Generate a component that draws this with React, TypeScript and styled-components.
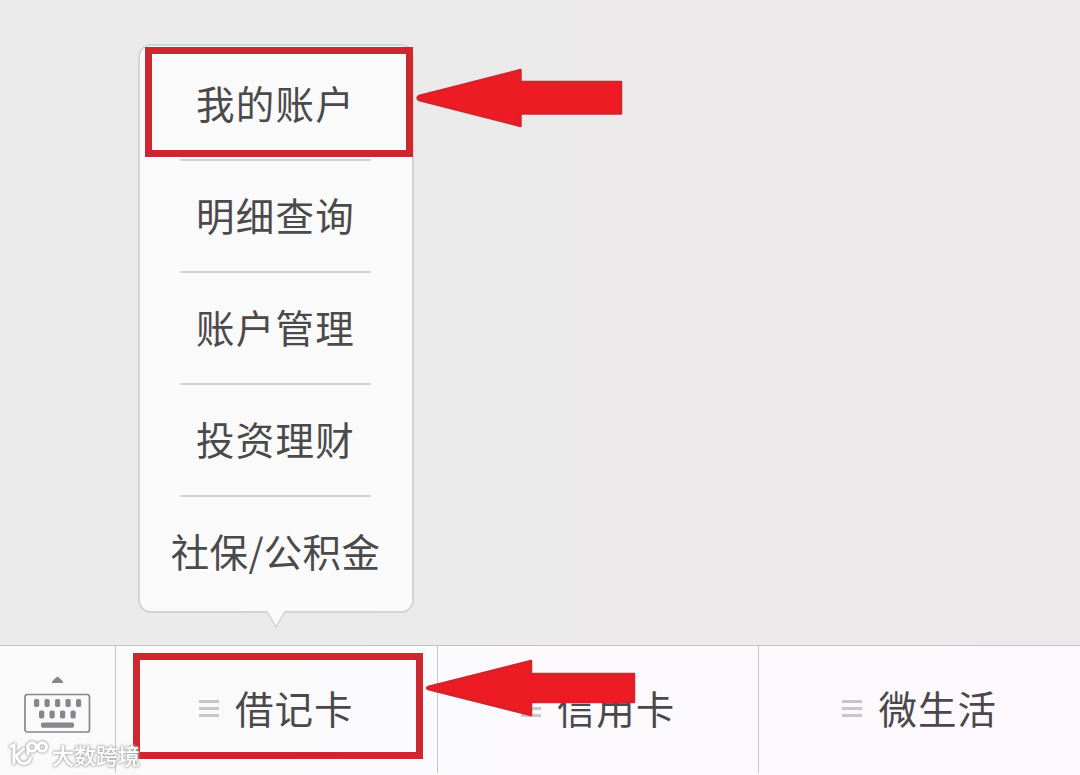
import styled, { createGlobalStyle } from "styled-components";

const GlobalStyle = createGlobalStyle`
  * {
    box-sizing: border-box;
  }
  body {
    margin: 0;
    overflow: hidden;
    font-family: "Noto Sans CJK SC", "Noto Sans", sans-serif;
  }
`;
const Screen = styled.div`
  position: relative;
  width: 1080px;
  height: 775px;
  display: flex;
  flex-direction: column;
  background: linear-gradient(90deg, #ebebeb 0%, #ebeaeb 40%, #ece9ea 100%);
`;
const Chat = styled.main`
  flex: 1;
  padding: 44px 0 0 137.5px;
`;
const MenuBubble = styled.div`
  position: relative;
  width: 276px;
  height: 569px;
  background: #fbfafb;
  border: 2px solid #d6d5d6;
  border-radius: 13px;
`;
const Menu = styled.ul`
  margin: 0;
  padding: 3px 0 0;
  list-style: none;
  display: flex;
  flex-direction: column;
  align-items: center;
`;
const MenuItem = styled.li<{ $tight: boolean }>`
  width: 191px;
  height: 112px;
  padding-bottom: 3px;
  display: flex;
  align-items: center;
  justify-content: center;
  color: #4b4a4b;
  font-size: 38.5px;
  letter-spacing: ${({ $tight }) => ($tight ? "0.3px" : "1.2px")};
  line-height: 1;
  white-space: nowrap;
  &:not(:last-child) {
    border-bottom: 2px solid #d3d2d4;
  }
  &:last-child {
    padding-bottom: 5px;
  }
`;
const MenuTail = styled.svg`
  position: absolute;
  left: 125px;
  top: 564px;
`;
const BottomBar = styled.nav`
  display: flex;
  height: 130px;
  border-top: 1.5px solid #c5c3c5;
  background: linear-gradient(90deg, #fafafa 0%, #fbfafc 40%, #fdf8fd 100%);
`;
const KeyboardButton = styled.div`
  width: 115px;
  padding: 29px 0 0 24px;
`;
const Tab = styled.div`
  flex: 1;
  height: 127px;
  border-left: 1.5px solid #c5c3c6;
  display: flex;
  align-items: center;
  justify-content: center;
  gap: 16px;
  color: #4a484b;
  font-size: 38.5px;
  letter-spacing: 1px;
  line-height: 1;
`;
const TabLabel = styled.span`
  padding-bottom: 5px;
`;
const Lines = styled.span`
  width: 20px;
  height: 17px;
  margin-bottom: 2px;
  display: flex;
  flex-direction: column;
  justify-content: space-between;
  &::before,
  &::after,
  i {
    content: "";
    height: 3px;
    background: #c8c6ca;
  }
`;
const Highlight = styled.div<{ $x: number; $y: number; $w: number; $h: number }>`
  position: absolute;
  left: ${({ $x }) => $x}px;
  top: ${({ $y }) => $y}px;
  width: ${({ $w }) => $w}px;
  height: ${({ $h }) => $h}px;
  border: 7px solid #cd2730;
`;
const Arrow = styled.svg<{ $x: number; $y: number }>`
  position: absolute;
  left: ${({ $x }) => $x}px;
  top: ${({ $y }) => $y}px;
  fill: #ed1c24;
  stroke: #d3232b;
  stroke-width: 2.5;
  stroke-linejoin: round;
`;
const Watermark = styled.div`
  position: absolute;
  left: 9px;
  top: 738px;
  display: flex;
  align-items: center;
  gap: 3px;
  color: #fff;
  font-size: 22px;
  font-weight: 500;
  line-height: 32px;
  filter: drop-shadow(0 0 1px #aaa) drop-shadow(0 0 1px #b5b5b5);
`;

const menuItems = ["我的账户", "明细查询", "账户管理", "投资理财", "社保/公积金"];
const tabs = ["借记卡", "信用卡", "微生活"];

const KeyboardIcon = () => (
  <svg width="67" height="60" viewBox="0 0 67 60" fill="#86868c">
    <path d="M28 8 Q27.5 7 28.5 6 L32 2.4 Q33.5 1 35 2.4 L38.5 6 Q39.5 7 39 8Z" />
    <rect x="1" y="19.5" width="64.5" height="37.5" rx="2.5" fill="none" stroke="#86868c" strokeWidth="1.7" />
    {[10, 20.5, 31, 41.5, 52].map((x) => (
      <rect key={x} x={x} y="24" width="5.2" height="8" rx="1.7" />
    ))}
    {[15, 25.5, 36, 46.5].map((x) => (
      <rect key={x} x={x} y="35.5" width="5.2" height="8" rx="1.7" />
    ))}
    <rect x="17" y="47.5" width="33" height="5.2" rx="1.7" />
  </svg>
);

const WatermarkLogo = () => (
  <svg width="40" height="28" viewBox="0 0 40 28" fill="none" stroke="#fff" strokeWidth="3" strokeLinecap="round">
    <path d="M2 6.5 L5 5 V23" />
    <path d="M14.5 9 L7.5 15.5 C9 25 18.5 26 21.5 18.5" />
    <path d="M19 13.5 V7" />
    <circle cx="23" cy="7" r="4.2" />
    <circle cx="33.3" cy="7" r="4.2" />
  </svg>
);

const App: React.FC = () => {
  return (
    <Screen>
      <GlobalStyle />
      <Chat>
        <MenuBubble>
          <Menu>
            {menuItems.map((item) => (
              <MenuItem key={item} $tight={item.length > 4}>
                {item}
              </MenuItem>
            ))}
          </Menu>
          <MenuTail width="22" height="20" viewBox="0 0 22 20">
            <path d="M2 0 V1 L11 17 L20 1 V0Z" fill="#fbfafb" />
            <path d="M2 1.5 L11 17 L20 1.5" fill="none" stroke="#d6d5d6" strokeWidth="1.5" />
          </MenuTail>
        </MenuBubble>
      </Chat>
      <BottomBar>
        <KeyboardButton>
          <KeyboardIcon />
        </KeyboardButton>
        {tabs.map((tab) => (
          <Tab key={tab}>
            <Lines>
              <i />
            </Lines>
            <TabLabel>{tab}</TabLabel>
          </Tab>
        ))}
      </BottomBar>

      <Highlight $x={145} $y={47} $w={268} $h={110} />
      <Highlight $x={133} $y={653} $w={290} $h={106} />
      <Arrow $x={415} $y={68} width="208" height="60">
        <path d="M4 28 L105.5 2 V14 H206 V45.5 H105.5 V58 L4 32 Q1 30 4 28Z" />
      </Arrow>
      <Arrow $x={425} $y={659} width="211" height="58">
        <path d="M3 28 L106 2 V15 H209 V43 H106 V56 L3 30 Q1 29 3 28Z" />
      </Arrow>
      <Watermark>
        <WatermarkLogo />
        大数跨境
      </Watermark>
    </Screen>
  );
};

export default App;
